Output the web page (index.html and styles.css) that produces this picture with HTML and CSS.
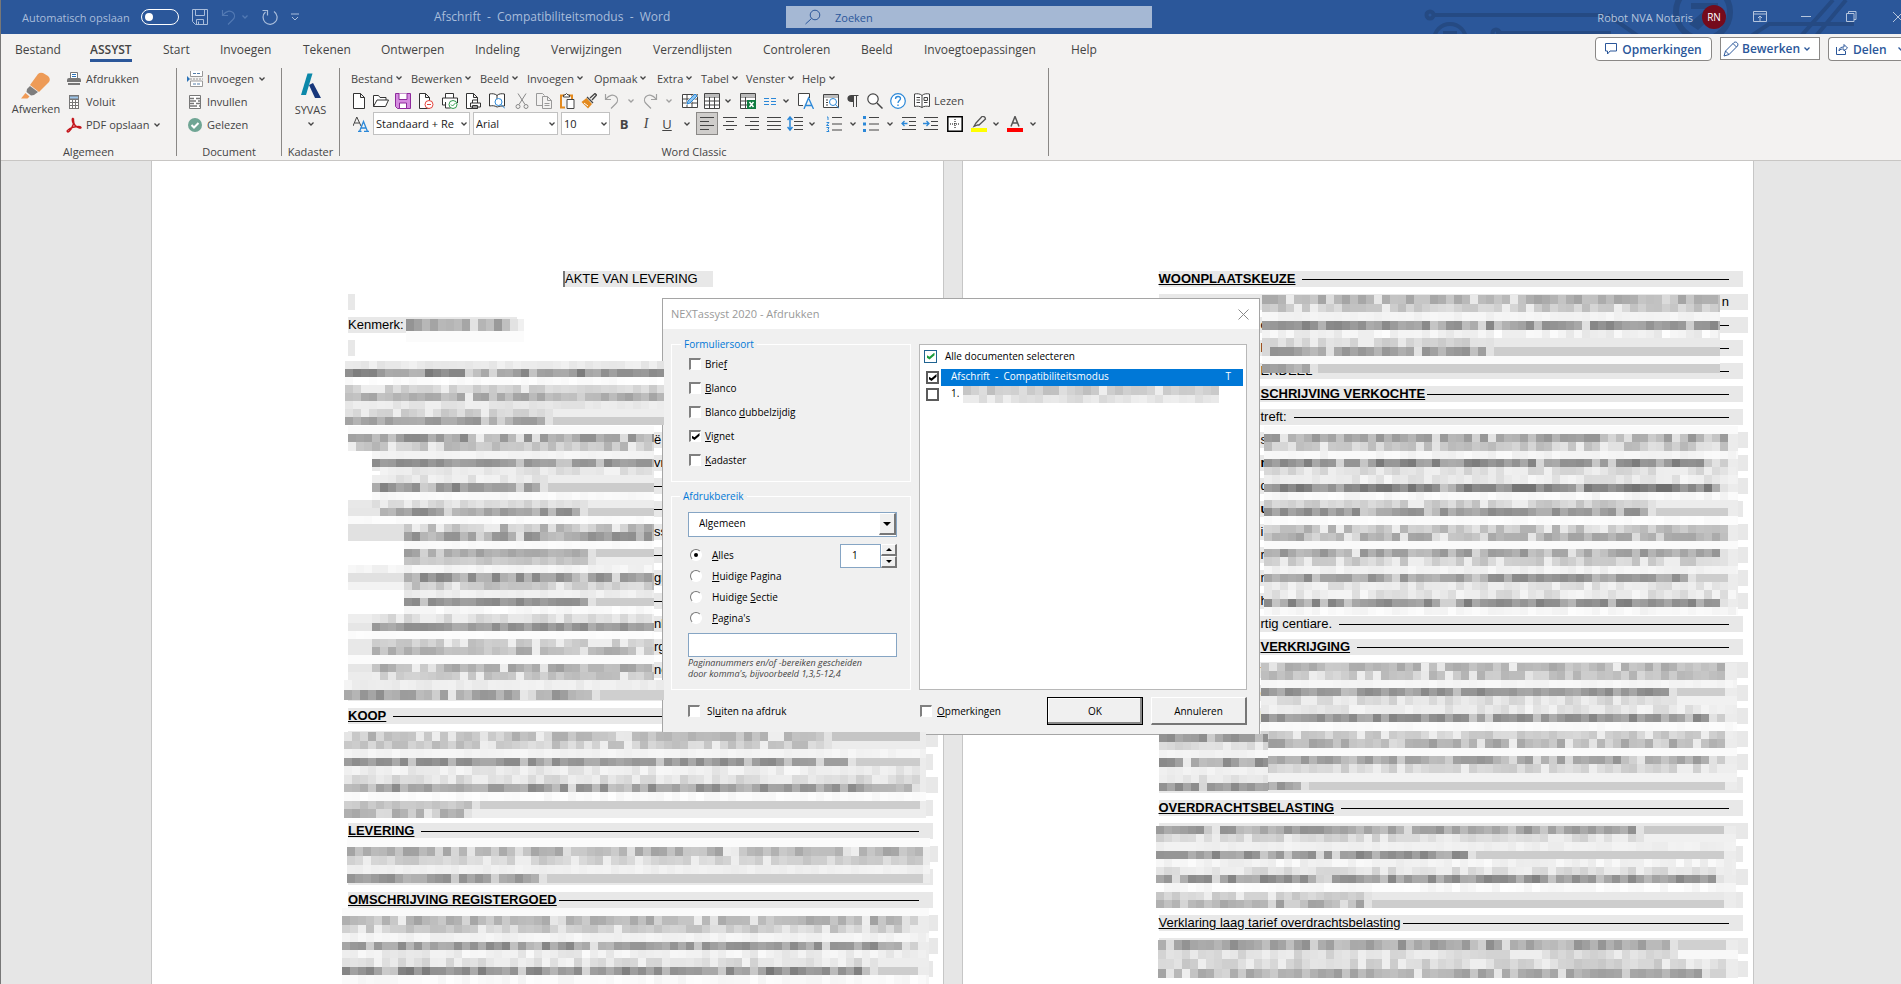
FILE: index.html
```html
<!DOCTYPE html>
<html lang="nl">
<head>
<meta charset="utf-8">
<title>Afschrift - Compatibiliteitsmodus - Word</title>
<link rel="stylesheet" href="styles.css">
</head>
<body>
<svg class="sprite" aria-hidden="true">
  <symbol id="chev" viewBox="0 0 8 8"><path d="M1.5 2.5 4 5l2.500-2.500" fill="none" stroke="currentColor" stroke-width="1.300"/></symbol>
  <symbol id="page" viewBox="0 0 16 16"><path d="M2.500.5h7l4 4v11h-11zM9.500.5v4h4" fill="#fff" stroke="#333"/></symbol>
  <symbol id="floppy" viewBox="0 0 16 16"><path d="M.5.5h15v15h-12l-3-3zM3.500.5v6h9v-6M4.500 15.500v-5h7v5M6.500 15v-2.500" fill="none" stroke="currentColor"/></symbol>
  <symbol id="undo" viewBox="0 0 16 16"><path d="M1.500 1v5.500H7M2 6c3-4 7-5 10-2.500 2.500 2.500 1.500 5.500 0 7L7 15.500" fill="none" stroke="currentColor" stroke-width="1.200"/></symbol>
</svg>

<header class="titlebar">
  <svg class="circuit" viewBox="0 0 480 34" aria-hidden="true">
    <g fill="none" stroke="#254a83" stroke-width="4"><circle cx="9" cy="15" r="3.500"/><path d="M13 15h170M75 33h115M187 15l40 28M330 36l18-12h85M380 36l32-36M395 36l30-36"/><circle cx="75" cy="33" r="3.500"/><circle cx="29" cy="40" r="16"/><circle cx="282" cy="12" r="27" stroke-width="6"/></g>
    <path d="M22 31h14v4H22zM270 3h27v6h-27zM268 24l17-15 8 6-16 15z" fill="#254a83"/>
  </svg>
  <div class="quick">
    <label class="autosave" for="auto">Automatisch opslaan</label><input class="toggle" type="checkbox" id="auto">
    <button class="tb" aria-label="Opslaan"><svg class="i16"><use href="#floppy"/></svg></button>
    <button class="tb dim" aria-label="Ongedaan maken"><svg class="i16"><use href="#undo"/></svg><svg class="i8"><use href="#chev"/></svg></button>
    <button class="tb" aria-label="Herhalen"><svg class="i16" viewBox="0 0 16 16"><path d="M3.500 3A7 7 0 1 0 12 2.500M.5 1.500h5v5" fill="none" stroke="currentColor" stroke-width="1.200"/></svg></button>
    <button class="tb" aria-label="Werkbalk aanpassen"><svg class="i8" viewBox="0 0 8 8"><path d="M0 1h8M1 4l3 3 3-3" fill="none" stroke="currentColor"/></svg></button>
  </div>
  <div class="doctitle">Afschrift&nbsp; -&nbsp; Compatibiliteitsmodus&nbsp; -&nbsp; Word</div>
  <div class="search"><svg class="i16" viewBox="0 0 16 16"><circle cx="10" cy="6" r="4.800" fill="none" stroke="currentColor"/><path d="M6.500 9.500.5 15" stroke="currentColor"/></svg><input type="text" aria-label="Zoeken" placeholder="Zoeken"></div>
  <div class="winctl">
    <span>Robot NVA Notaris</span><span class="avatar">RN</span>
    <button class="tb wide" aria-label="Lint weergeven"><svg width="14" height="12" viewBox="0 0 14 12"><path d="M.5.5h13v10H.5zM.5 3h13M7 10V5M5 7l2-2 2 2" fill="none" stroke="currentColor"/></svg></button>
    <button class="tb wide" aria-label="Minimaliseren"><svg width="10" height="12" viewBox="0 0 10 12"><path d="M0 5.500h10" stroke="currentColor"/></svg></button>
    <button class="tb wide" aria-label="Herstellen"><svg width="11" height="12" viewBox="0 0 11 12"><path d="M.5 2.500h7.500v8H.5zM2.500 2V.5h7.500v8H8" fill="none" stroke="currentColor"/></svg></button>
    <button class="tb close" aria-label="Sluiten"><svg width="8" height="12" viewBox="0 0 8 12"><path d="m0 1 10 10M10 1 0 11" stroke="currentColor"/></svg></button>
  </div>
</header>

<section class="ribbon">
  <div class="tabrow">
    <nav class="tabs">
      <a href="#">Bestand</a><a href="#" class="on"><span>ASSYST</span></a><a href="#">Start</a><a href="#">Invoegen</a><a href="#">Tekenen</a><a href="#">Ontwerpen</a><a href="#">Indeling</a><a href="#">Verwijzingen</a><a href="#">Verzendlijsten</a><a href="#">Controleren</a><a href="#">Beeld</a><a href="#">Invoegtoepassingen</a><a href="#">Help</a>
    </nav>
    <div class="share">
      <button class="pill"><svg width="12" height="12" viewBox="0 0 12 12"><path d="M.5.500h11v7.500H5L2.500 11V8h-2z" fill="none" stroke="currentColor"/></svg>Opmerkingen</button>
      <button class="pill square"><svg class="i16" viewBox="0 0 16 16"><path d="m1 15 1.500-5L11 1.500c2-1.500 5 1 3.500 3.500L6 13.500zM2.500 10 6 13.500M10 2.500 13.500 6" fill="none" stroke="currentColor"/></svg>Bewerken<svg class="i8"><use href="#chev"/></svg></button>
      <button class="pill last"><svg width="12" height="12" viewBox="0 0 12 12"><path d="M.5 4v7.500h9V8M3 8c0-3 2-4 5-4V1.500L11.500 5 8 8V6C6 6 4 6 3 8z" fill="none" stroke="currentColor"/></svg>Delen<svg class="i8"><use href="#chev"/></svg></button>
    </div>
  </div>
  <div class="groups">
    <div class="group g1">
      <div class="gbody">
        <button class="big"><svg width="30" height="28" viewBox="0 0 30 28"><path d="M17 2q2-2 5-1l5 3q3 3 1 6L18 20 9 13z" fill="#ed9b57"/><path d="m9 14 8 6-4 3-3 .5L5.500 20 6 17z" fill="#7d7d7d"/><path d="m4.500 21 4 3.500-2 2H0z" fill="#f09a55"/></svg>Afwerken</button>
        <div class="stack">
          <button><svg class="i16 w14" viewBox="0 0 14 14"><path d="M3.500 6V.5h7V6" fill="#fff" stroke="#777"/><path d="M5 2.500h4M5 4.500h4" stroke="#2b73b8"/><path d="M0 8q0-2 2-2h10q2 0 2 2v2H0zM1 11h12v2H1z" fill="#777"/></svg>Afdrukken</button>
          <button><svg class="i16 w14" viewBox="0 0 14 14"><path d="M2 0h10v14H2z" fill="#777"/><path d="M3 1.500h8v2H3z" fill="#9cc5ea"/><path d="M3 5h2v2H3zm3 0h2v2H6zm3 0h2v2H9zM3 8h2v2H3zm3 0h2v2H6zm3 0h2v2H9zM3 11h2v2H3zm3 0h2v2H6zm3 0h2v2H9z" fill="#fff"/></svg>Voluit</button>
          <button><svg class="i16" viewBox="0 0 16 16"><path d="M7 1.500C6 1 6 4 7.500 7c-1 3-3 6-4.500 7.500C1.500 15.500.5 14 2 13c3-2.500 8-3.500 11-3.500 2.500 0 2.500 2 .5 1.500C10 10 7 7.500 7.500 2z" fill="none" stroke="#c4161c" stroke-width="1.500"/></svg>PDF opslaan<svg class="i8"><use href="#chev"/></svg></button>
        </div>
      </div>
      <div class="gname">Algemeen</div>
    </div>
    <div class="group g2">
      <div class="gbody">
        <div class="stack">
          <button><svg class="i16" viewBox="0 0 16 16"><path d="M3.500 0v5.500h12V0M3.500 15.500v-5.500h12v5.500z" fill="#fff" stroke="#999"/><path d="M6 2.500h3m1 0h3M6 13h3m1 0h3" stroke="#557ea8"/><path d="M3 8h13" stroke="#999" stroke-dasharray="2 1"/><path d="m0 5 3 3-3 3z" fill="#2b73b8"/></svg>Invoegen<svg class="i8"><use href="#chev"/></svg></button>
          <button><svg class="i16 w14" viewBox="0 0 14 14"><path d="M1.500.5h11v13h-11z" fill="#fff" stroke="#777"/><path d="M2 3.500h4m2 0h4M2 6h6m2 0h2M2 8.500h4m2 0h4M2 11h7m2 0h1" stroke="#777" stroke-width="1.500"/></svg>Invullen</button>
          <button><svg class="i16 w14" viewBox="0 0 14 14"><circle cx="7" cy="7" r="7" fill="#6fa594"/><path d="m3.500 7 2.500 2.500L10.500 5" fill="none" stroke="#fff" stroke-width="2"/></svg>Gelezen</button>
        </div>
      </div>
      <div class="gname">Document</div>
    </div>
    <div class="group g3">
      <div class="gbody">
        <button class="big"><svg width="22" height="28" viewBox="0 0 22 28"><path d="M7.500 1.500h5L6 23H1z" fill="#0b88a9"/><path d="m9 13 4-2 8 15h-6z" fill="#17377b"/></svg>SYVAS<svg class="i8"><use href="#chev"/></svg></button>
      </div>
      <div class="gname">Kadaster</div>
    </div>
    <div class="group g4">
      <div class="classic">
        <div class="menus">
          <button>Bestand<svg class="i8"><use href="#chev"/></svg></button><button>Bewerken<svg class="i8"><use href="#chev"/></svg></button><button>Beeld<svg class="i8"><use href="#chev"/></svg></button><button>Invoegen<svg class="i8"><use href="#chev"/></svg></button><button>Opmaak<svg class="i8"><use href="#chev"/></svg></button><button>Extra<svg class="i8"><use href="#chev"/></svg></button><button>Tabel<svg class="i8"><use href="#chev"/></svg></button><button>Venster<svg class="i8"><use href="#chev"/></svg></button><button>Help<svg class="i8"><use href="#chev"/></svg></button>
        </div>
        <div class="tools">
          <button aria-label="Nieuw"><svg class="i16"><use href="#page"/></svg></button>
          <button aria-label="Openen"><svg class="i16" viewBox="0 0 16 16"><path d="M.5 13.500v-11h5l1.500 2h6V7M.5 13.500 4 7h11.500l-3 6.500z" fill="#fff" stroke="#333"/></svg></button>
          <button aria-label="Opslaan"><svg class="i16" viewBox="0 0 16 16"><path d="M.5.5h15v15h-13l-2-2z" fill="#d58be0" stroke="#8e2a9c"/><path d="M4 .5v6h8v-6M4.500 15.500V10h7v5.500z" fill="#fff" stroke="#8e2a9c"/></svg></button>
          <button aria-label="Sluiten"><svg class="i16" viewBox="0 0 16 16"><path d="M1.500.5h6l4 4v11h-10zM7.500.5v4h4" fill="#fff" stroke="#333"/><circle cx="11" cy="11.500" r="4" fill="#fff" stroke="#e4413a"/><path d="M9 11.500h4" stroke="#e4413a"/></svg></button>
          <button aria-label="Snel afdrukken"><svg class="i16" viewBox="0 0 16 16"><path d="M3.500 5V.5h8V5M3.500 12H.5V5h15v5M3.500 9v6h5" fill="#fff" stroke="#333"/><circle cx="11" cy="11.500" r="4" fill="#fff" stroke="#2f9a4b"/><path d="m9 11.500 1.500 1.500 3-3" fill="none" stroke="#2f9a4b"/></svg></button>
          <button aria-label="Afdrukken"><svg class="i16" viewBox="0 0 16 16"><path d="M1.500.5h7l4 4v11h-11zM8.500.5v4h4" fill="#fff" stroke="#333"/><path d="M7.500 10V7h5v3M5.500 10h10v4h-10zM7.500 12.500h5v3h-5z" fill="#fff" stroke="#333"/></svg></button>
          <button aria-label="Afdrukvoorbeeld"><svg class="i16" viewBox="0 0 16 16"><path d="M8 2.500C6 .5 3 .5.5 1v12c3-.5 5-.5 7.500 1 1 0 2-1 5-1h2.500V1C13 .5 10 .5 8 2.500v4" fill="#fff" stroke="#333"/><circle cx="9.500" cy="9" r="3.500" fill="#fff" stroke="#2b88d8"/><path d="m12 11.500 4 4" stroke="#2b88d8"/></svg></button>
          <button class="off" aria-label="Knippen"><svg class="i16" viewBox="0 0 16 16"><path d="m4 .5 7 11M12 .5l-7 11" stroke="#888"/><circle cx="4" cy="13.500" r="2" fill="none" stroke="#888"/><circle cx="12" cy="13.500" r="2" fill="none" stroke="#888"/></svg></button>
          <button class="off" aria-label="Kopiëren"><svg class="i16" viewBox="0 0 16 16"><path d="M6 12.500H.5V.5h6l2 2M6.500 3.500h5l4 4v8h-9zM11.500 3.500v4h4M8.500 10.500h5M8.500 12.500h5" fill="none" stroke="#999"/></svg></button>
          <button aria-label="Plakken"><svg class="i16" viewBox="0 0 16 16"><path d="M6 14.500H2v-12h11V6" fill="none" stroke="#e38a1f" stroke-width="2"/><path d="M4.500 4V2H6q1.500-3 3 0h1.500v2zM8 6.500h7v9H8z" fill="#fff" stroke="#444"/></svg></button>
          <button aria-label="Opmaak kopiëren"><svg class="i16" viewBox="0 0 16 16"><path d="m9 5 5-4.500 1.500 1.500L11 7M6 4l6 6" fill="none" stroke="#444" stroke-width="1.300"/><path d="m5.500 5 5.500 6-4 4.500L.5 9z" fill="#e38a1f"/><path d="m3 10 4 3" stroke="#fff"/></svg></button>
          <button class="off" aria-label="Ongedaan maken"><svg class="i16"><use href="#undo"/></svg></button><button class="off" aria-label="Meer"><svg class="i8"><use href="#chev"/></svg></button>
          <button class="off" aria-label="Opnieuw"><svg class="i16 flip"><use href="#undo"/></svg></button><button class="off" aria-label="Meer"><svg class="i8"><use href="#chev"/></svg></button>
          <button aria-label="Tabel tekenen"><svg class="i16" viewBox="0 0 16 16"><path d="M.5 1.500h15v13H.5zM.5 6h15M.5 10h15M5 1.500v13M10 1.500v13" fill="#fff" stroke="#444"/><path d="m4 12 1-4 8-8 3 3-8 8z" fill="#fff"/><path d="m5 11 1-3 7-7 2 2-7 7z" fill="#8cc4f0" stroke="#2b88d8"/></svg></button>
          <button aria-label="Tabel"><svg class="i16" viewBox="0 0 16 16"><path d="M.5.5h15v15H.5zM.5 4h15M.5 8h15M.5 12h15M5.500 4v12M10.500 4v12" fill="#fff" stroke="#444"/><path d="M1 1h14v3H1z" fill="#bbb"/></svg></button><button aria-label="Meer"><svg class="i8"><use href="#chev"/></svg></button>
          <button aria-label="Excel-werkblad"><svg class="i16" viewBox="0 0 16 16"><path d="M.5.5h15v15H.5zM.5 4h15M.5 8h15M.5 12h15M5.500 4v12" fill="#fff" stroke="#444"/><path d="M1 1h14v3H1z" fill="#bbb"/><path d="M7 7h9v9H7z" fill="#107c41"/><path d="m9.500 9 4 5m0-5-4 5" stroke="#fff" stroke-width="1.500"/></svg></button>
          <button aria-label="Kolommen"><svg class="i16 w14" viewBox="0 0 14 14"><path d="M1 4.500h5M1 7.500h5M1 10.500h5M8 4.500h5M8 7.500h5M8 10.500h5" stroke="#2b88d8"/></svg></button><button aria-label="Meer"><svg class="i8"><use href="#chev"/></svg></button>
          <button aria-label="Tekstvak"><svg class="i16" viewBox="0 0 16 16"><path d="M5 12.500H.5V.5h11V5" fill="#fff" stroke="#444"/><path d="m6 16 4.500-11L15.500 16M7.500 12.500h6" fill="none" stroke="#2b88d8" stroke-width="1.300"/></svg></button>
          <button aria-label="Veld zoeken"><svg class="i16" viewBox="0 0 16 16"><path d="M.5 1.500h15v13H.5z" fill="#fff" stroke="#444"/><path d="M1 2h14v3H1z" fill="#bbb"/><path d="M3 7h2M3 9.500h2M3 12h2" stroke="#444"/><circle cx="10" cy="9" r="3.500" fill="#fff" stroke="#2b88d8"/><path d="m12.500 11.500 3.500 4" stroke="#2b88d8"/></svg></button>
          <button aria-label="Alles weergeven"><svg class="i16 w14" viewBox="0 0 14 14"><path d="M8 1H5.500a3.500 3 0 0 0 0 7H8z" fill="#444"/><path d="M7.500 1v12M10.500 1v12M5 1.500h7.500" stroke="#444" fill="none"/></svg></button>
          <button aria-label="Zoeken"><svg class="i16" viewBox="0 0 16 16"><circle cx="6" cy="6" r="5.200" fill="#fff" stroke="#444" stroke-width="1.200"/><path d="m10 10 5.500 5.500" stroke="#444" stroke-width="1.500"/></svg></button>
          <button aria-label="Help"><svg class="i16" viewBox="0 0 16 16"><circle cx="8" cy="8" r="7.300" fill="#fff" stroke="#2b88d8" stroke-width="1.200"/><path d="M5.500 6c0-3.500 5-3 5-.5C10.500 7.500 8 7.500 8 10M8 11.500V13" fill="none" stroke="#2b88d8" stroke-width="1.300"/></svg></button>
          <button class="read"><svg class="i16" viewBox="0 0 16 16"><path d="M8 2.500C6 .5 3 .5.5 1v12.500c3-.5 5-.5 7.500 1 1.500-1.500 5-1.500 7.500-1V1C13 .5 10 .5 8 2.500zm0 0v12M2.500 4.500H6M2.500 7H6M2.500 9.500H6M10 4.500h3.500v3H10zM10 9.500h3.500" fill="#fff" stroke="#444"/></svg>Lezen</button>
        </div>
        <div class="format">
          <button aria-label="Stijlen"><svg class="i16" viewBox="0 0 16 16"><path d="m0 10 3.800-9L8 10M1.500 7h5" fill="none" stroke="#444"/><path d="M5 15.500h3.500m2.500 0h5M6.500 15.500l4-10 4 10M8 12h5" fill="none" stroke="#2b88d8" stroke-width="1.300"/></svg></button>
          <span class="combo c1"><select aria-label="Stijl"><option>Standaard + Re</option></select><svg class="i8"><use href="#chev"/></svg></span>
          <span class="combo c2"><select aria-label="Lettertype"><option>Arial</option></select><svg class="i8"><use href="#chev"/></svg></span>
          <span class="combo c3"><select aria-label="Tekengrootte"><option>10</option></select><svg class="i8"><use href="#chev"/></svg></span>
          <button class="ltr"><b>B</b></button><button class="ltr"><i>I</i></button><button class="ltr"><u>U</u></button><button aria-label="Meer"><svg class="i8"><use href="#chev"/></svg></button>
          <button class="pressed" aria-label="Links"><svg class="i16" viewBox="0 0 16 16"><path d="M1 1.500h14M1 5.500h9M1 9.500h14M1 13.500h9" stroke="#444"/></svg></button>
          <button aria-label="Centreren"><svg class="i16" viewBox="0 0 16 16"><path d="M1 1.500h14M4 5.500h8M1 9.500h14M4 13.500h8" stroke="#444"/></svg></button>
          <button aria-label="Rechts"><svg class="i16" viewBox="0 0 16 16"><path d="M1 1.500h14M6 5.500h9M1 9.500h14M6 13.500h9" stroke="#444"/></svg></button>
          <button aria-label="Uitvullen"><svg class="i16" viewBox="0 0 16 16"><path d="M1 1.500h14M1 5.500h14M1 9.500h14M1 13.500h14" stroke="#444"/></svg></button>
          <button aria-label="Regelafstand"><svg class="i16" viewBox="0 0 16 16"><path d="M7 1.500h9M7 5.500h9M7 9.500h9M7 13.500h9" stroke="#444"/><path d="M3 1v13M.5 4 3 1l2.500 3M.5 11 3 14l2.500-3" fill="none" stroke="#2b88d8" stroke-width="1.500"/></svg></button><button aria-label="Meer"><svg class="i8"><use href="#chev"/></svg></button>
          <button aria-label="Nummering"><svg class="i16" viewBox="0 0 16 16"><path d="M6 1.500h10M6 8h10M6 14h10" stroke="#444"/><path d="M1 1h1v3M.5 6.500H3L.5 9.500H3M.5 11.500H3l-1 2 1 2H.5" fill="none" stroke="#2b88d8"/></svg></button><button aria-label="Meer"><svg class="i8"><use href="#chev"/></svg></button>
          <button aria-label="Opsommingstekens"><svg class="i16" viewBox="0 0 16 16"><path d="M6 1.500h10M6 8h10M6 14h10" stroke="#444"/><path d="M0 0h3v3H0zM0 6.500h3v3H0zM0 13h3v3H0z" fill="#2b88d8"/></svg></button><button aria-label="Meer"><svg class="i8"><use href="#chev"/></svg></button>
          <button aria-label="Inspringing verkleinen"><svg class="i16" viewBox="0 0 16 16"><path d="M1 1.500h14M8 5.500h7M8 9.500h7M1 13.500h14" stroke="#444"/><path d="M6.500 7.500H1M3.500 5 1 7.500 3.500 10" fill="none" stroke="#2b88d8" stroke-width="1.300"/></svg></button>
          <button aria-label="Inspringing vergroten"><svg class="i16" viewBox="0 0 16 16"><path d="M1 1.500h14M8 5.500h7M8 9.500h7M1 13.500h14" stroke="#444"/><path d="M0 7.500h6M3.500 5 6 7.500 3.500 10" fill="none" stroke="#2b88d8" stroke-width="1.300"/></svg></button>
          <button aria-label="Randen"><svg class="i16" viewBox="0 0 16 16"><path d="M.8.8h14.400v14.400H.8z" fill="#fff" stroke="#000" stroke-width="1.500"/><path d="M3 8h10M8 3v10" stroke="#000" stroke-dasharray="1 1"/></svg></button>
          <button aria-label="Markeren"><svg class="i16" viewBox="0 0 16 16"><path d="M0 12h16v4H0z" fill="#ff0"/><path d="m5 7 6-6.500q3-.5 3.500 2.500L8 9H6.500L3 10.500z" fill="none" stroke="#555" stroke-width="1.300"/></svg></button><button aria-label="Meer"><svg class="i8"><use href="#chev"/></svg></button>
          <button aria-label="Tekstkleur"><svg class="i16" viewBox="0 0 16 16"><path d="M0 12h16v4H0z" fill="red"/><path d="m4 10.500 4-10 4 10M5.500 7h5" fill="none" stroke="#555" stroke-width="1.500"/></svg></button><button aria-label="Meer"><svg class="i8"><use href="#chev"/></svg></button>
        </div>
      </div>
      <div class="gname">Word Classic</div>
    </div>
  </div>
</section>

<main class="workspace">
  <article class="sheet">
    <div class="ln title"><span>AKTE VAN LEVERING</span></div>
    <div class="ln stub"></div>
    <div class="ln short"><span>Kenmerk:</span></div>
    <div class="ln stub"></div>
    <div class="ln wrap"></div>
    <div class="ln wrap"></div>
    <div class="ln"></div>
    <div class="ln wrap frag"><span>ë</span></div>
    <div class="ln wrap frag in1"><span>vr</span></div>
    <div class="ln frag in1"><hr></div>
    <div class="ln frag"><hr></div>
    <div class="ln wrap frag"><span>ss</span></div>
    <div class="ln frag in2"><hr></div>
    <div class="ln wrap frag"><span>gr</span></div>
    <div class="ln frag in2"><hr></div>
    <div class="ln wrap frag"><span>nl</span></div>
    <div class="ln wrap frag"><span>rg</span></div>
    <div class="ln wrap frag"><span>no</span></div>
    <div class="ln"></div>
    <div class="ln"><h2>KOOP</h2><hr></div>
    <div class="ln wrap"></div>
    <div class="ln"></div>
    <div class="ln wrap"></div>
    <div class="ln"></div>
    <div class="ln"><h2>LEVERING</h2><hr></div>
    <div class="ln wrap"></div>
    <div class="ln"></div>
    <div class="ln tight"><h2>OMSCHRIJVING REGISTERGOED</h2><hr></div>
    <div class="ln wrap"></div>
    <div class="ln wrap"></div>
    <div class="ln"></div>
  </article>
  <article class="sheet">
    <div class="ln"><h2>WOONPLAATSKEUZE</h2><hr></div>
    <div class="ln wrap end"><span>n</span></div>
    <div class="ln wrap side"><span>c</span><hr></div>
    <div class="ln side"><span>k</span><hr></div>
    <div class="ln side"><span>ERDEEL</span><hr></div>
    <div class="ln side tight"><h2>SCHRIJVING VERKOCHTE</h2><hr></div>
    <div class="ln side"><span>treft:</span><hr></div>
    <div class="ln wrap side"><span>s</span></div>
    <div class="ln wrap side"><b>n</b></div>
    <div class="ln wrap side"><span>d</span></div>
    <div class="ln side"><b>u</b></div>
    <div class="ln wrap side"><span>i</span></div>
    <div class="ln wrap side"><span>r</span></div>
    <div class="ln wrap side"><span>n</span></div>
    <div class="ln wrap side"><span>h</span></div>
    <div class="ln side"><span>rtig centiare.</span><hr></div>
    <div class="ln side"><h2>VERKRIJGING</h2><hr></div>
    <div class="ln wrap side"><span>t</span></div>
    <div class="ln wrap side"><span>e</span></div>
    <div class="ln wrap side"><b>l</b></div>
    <div class="ln wrap"></div>
    <div class="ln wrap"></div>
    <div class="ln"></div>
    <div class="ln"><h2>OVERDRACHTSBELASTING</h2><hr></div>
    <div class="ln wrap"></div>
    <div class="ln"></div>
    <div class="ln wrap"></div>
    <div class="ln"></div>
    <div class="ln tight"><h3>Verklaring laag tarief overdrachtsbelasting</h3><hr></div>
    <div class="ln wrap"></div>
    <div class="ln wrap"></div>
  </article>

  <form class="dialog" role="dialog" aria-labelledby="dt">
    <header class="dtitle"><span id="dt">NEXTassyst 2020 - Afdrukken</span><button type="button" aria-label="Sluiten"><svg width="11" height="11" viewBox="0 0 11 11"><path d="m.5.500 10 10M10.500.5l-10 10" stroke="#888"/></svg></button></header>
    <div class="dbody">
      <div class="dleft">
        <fieldset class="kind">
          <legend>Formuliersoort</legend>
          <label><input type="checkbox"><span>Brie<u>f</u></span></label>
          <label><input type="checkbox"><span><u>B</u>lanco</span></label>
          <label><input type="checkbox"><span>Blanco <u>d</u>ubbelzijdig</span></label>
          <label><input type="checkbox" checked><span><u>V</u>ignet</span></label>
          <label><input type="checkbox"><span><u>K</u>adaster</span></label>
        </fieldset>
        <fieldset class="range">
          <legend>Afdrukbereik</legend>
          <div class="drop"><select aria-label="Bereik"><option>Algemeen</option></select><span class="arrow"></span></div>
          <div class="radios">
            <div>
              <label><input type="radio" name="r" checked><span><u>A</u>lles</span></label>
              <label><input type="radio" name="r"><span><u>H</u>uidige Pagina</span></label>
              <label><input type="radio" name="r"><span>Huidige <u>S</u>ectie</span></label>
              <label><input type="radio" name="r"><span><u>P</u>agina's</span></label>
            </div>
            <div class="spin"><input type="text" value="1" aria-label="Aantal"><div><button type="button" class="up" aria-label="Meer"></button><button type="button" class="down" aria-label="Minder"></button></div></div>
          </div>
          <input class="pages" type="text" aria-describedby="hint" aria-label="Paginanummers">
          <p class="hint" id="hint">Paginanummers en/of -bereiken gescheiden<br>door komma's, bijvoorbeeld 1,3,5-12,4</p>
        </fieldset>
      </div>
      <div class="list">
        <label class="all"><input type="checkbox" checked><span>Alle documenten selecteren</span></label>
        <label class="item sel"><input type="checkbox" checked><span class="cell"><span>Afschrift&nbsp; -&nbsp; Compatibiliteitsmodus</span><span>T</span></span></label>
        <label class="item"><input type="checkbox"><span class="cell">1.</span></label>
      </div>
    </div>
    <footer class="dfoot">
      <label class="f1"><input type="checkbox"><span>Sl<u>u</u>iten na afdruk</span></label>
      <label class="f2"><input type="checkbox"><span><u>O</u>pmerkingen</span></label>
      <button type="button" class="ok">OK</button><button type="button" class="cancel">Annuleren</button>
    </footer>
  </form>
</main>
<script src="mosaic.js"></script>
</body>
</html>
```
FILE: styles.css
```css
* { box-sizing: border-box; }
body { margin: 0; height: 100vh; overflow: hidden; display: flex; flex-direction: column; background: #e6e6e6; border-left: 1px solid #777; font-family: "Open Sans", "Noto Sans", sans-serif; font-size: 11px; color: #444; }
button { font: inherit; color: inherit; background: none; border: 0; padding: 0; display: flex; align-items: center; justify-content: center; white-space: nowrap; }
button svg { flex: none; }
.sprite { position: absolute; width: 0; height: 0; }
.i16 { width: 16px; height: 16px; flex: none; }
.w14 { width: 14px; height: 14px; }
.i8 { width: 8px; height: 8px; }
.flip { transform: scaleX(-1); }

.titlebar { position: relative; flex: none; height: 34px; background: #2b579a; color: #a9bddb; display: grid; grid-template-columns: 433px 352px 366px 1fr; align-items: center; overflow: hidden; }
.circuit { position: absolute; right: 0; top: 0; width: 480px; height: 34px; }
.quick { display: flex; align-items: center; padding-left: 21px; gap: 13px; }
.autosave { margin-right: -2px; }
.toggle { appearance: none; width: 38px; height: 16px; margin: 0; border: 1px solid #fff; border-radius: 8px; padding: 3px; }
.toggle::before { content: ""; display: block; width: 8px; height: 8px; border-radius: 4px; background: #fff; }
.tb.dim { color: #5279b3; gap: 4px; }
.doctitle { font-size: 12px; line-height: 16px; }
.search { position: relative; height: 22px; background: #a5b8d4; color: #2b579a; display: flex; align-items: center; padding-left: 19px; gap: 14px; }
.search input { flex: 1; min-width: 0; border: 0; background: none; font: inherit; padding: 0; outline: 0; }
.search input::placeholder { color: #2b579a; opacity: 1; }
.winctl { position: relative; display: flex; align-items: center; justify-content: flex-end; gap: 9px; color: #b5c5dd; overflow: hidden; }
.avatar { width: 24px; height: 24px; margin-right: 6px; border-radius: 12px; background: #750b1c; color: #fff; font-size: 10px; line-height: 24px; text-align: center; }
.tb.wide { width: 37px; }
.winctl .close { width: 22px; justify-content: flex-end; }

.ribbon { flex: none; height: 127px; background: #f3f2f1; border-bottom: 1px solid #c8c6c4; }
.tabrow { display: flex; justify-content: space-between; height: 31px; overflow: hidden; }
.tabs { display: grid; grid-template-columns: 75px 73px 57px 83px 78px 94px 76px 102px 110px 98px 63px 147px auto; padding-left: 14px; font-size: 12px; line-height: 32px; }
.tabs a { color: #444; text-decoration: none; white-space: nowrap; }
.tabs .on span { display: inline-block; height: 28px; border-bottom: 3px solid #2b579a; font-weight: 600; }
.share { display: flex; align-items: flex-start; gap: 8px; padding-top: 3px; color: #2b579a; font-size: 12px; font-weight: 600; }
.pill { height: 24px; background: #fff; border: 1px solid #8a8886; border-radius: 4px; gap: 5px; width: 117px; }
.square { border-radius: 0; width: 100px; height: 23px; gap: 3px; justify-content: flex-start; padding-left: 2px; }
.last { width: 73px; border-right: 0; border-radius: 4px 0 0 4px; justify-content: flex-start; padding-left: 7px; overflow: hidden; }
.last .i8 { margin-left: 5px; }
.groups { display: flex; height: 91px; padding-top: 3px; }
.group { display: flex; flex-direction: column; justify-content: space-between; height: 88px; border-right: 1px solid #8a8886; }
.g1 { width: 176px; }
.g1 .gbody { padding-left: 8px; }
.g2 { width: 105px; }
.g2 .gbody { padding-left: 10px; }
.g3 { width: 58px; }
.g4 { width: 709px; }
.classic { padding-left: 8px; }
.gbody, .classic { margin-top: -1px; }
.gname { text-align: center; line-height: 14px; margin-bottom: -3px; }
.gbody { display: flex; justify-content: flex-start; }
.big { flex-direction: column; justify-content: flex-start; width: 54px; padding-top: 5px; gap: 1px; line-height: 16px; }
.g3 .gbody { justify-content: center; }
.g3 .big { gap: 2px; }
.stack { display: flex; flex-direction: column; padding-left: 3px; }
.stack button { justify-content: flex-start; height: 23px; gap: 4px; }
.stack .w14 { margin: 0 1px; }
.g2 .stack { padding-left: 0; }
.menus { display: grid; grid-template-columns: 60px 69px 47px 67px 63px 44px 45px 56px auto; padding-left: 3px; width: 540px; }
.menus button { height: 22px; justify-content: flex-start; gap: 2px; }
.tools, .format { display: grid; height: 23px; align-items: center; }
.tools { grid-template-columns: 22px 22px 22px 24px 23px 23px 26px 23px 22px 23px 22px 24px 14px 24px 14px 27px 18px 13px 28px 16px 15px 25px 26px 18px 25px 21px 60px; }
.format { grid-template-columns: 25px 100px 88px 52px 22px 22px 20px 19px 23px 22px 22px 22px 19px 15px 29px 10px 26px 11px 28px 16px 31px 17px 17px 22px 14px; }
.off { color: #a0a0a0; }
.read { gap: 4px; justify-content: flex-start; padding-left: 6px; }
.combo { position: relative; display: block; height: 23px; }
.c1 { width: 97px; } .c2 { width: 85px; } .c3 { width: 49px; }
.combo select { appearance: none; width: 100%; height: 23px; border: 1px solid #c1c1c1; border-radius: 0; background: #fff; font: inherit; color: #222; padding: 0 0 0 2px; }
.combo svg { position: absolute; right: 2px; top: 8px; }
.ltr { font-size: 13px; }
.ltr i { font-family: "Liberation Serif", serif; font-size: 14px; }
.pressed { background: #cfcdcb; border: 1px solid #8a8886; height: 23px; width: 22px; }

.workspace { position: relative; flex: 1; min-height: 0; display: flex; gap: 18px; padding: 0 147px 0 150px; }
.sheet { flex: 1; min-width: 0; background: #fff; border: 1px solid #c6c6c6; border-top: 0; border-bottom: 0; padding: 110px 0 0 196px; font-family: "Liberation Sans", Arial, sans-serif; font-size: 13px; color: #000; overflow: hidden; }
.ln { height: 16px; line-height: 18px; margin: 0 10px 7px 0; padding-right: 14px; background: #e8e8e8; display: flex; gap: 7px; align-items: center; white-space: nowrap; }
.ln.wrap { margin-right: 5px; padding-right: 19px; }
.ln h2, .ln h3 { margin: 0; font-size: 13px; line-height: 18px; text-decoration: underline; }
.ln h3 { font-weight: 400; }
.ln hr { flex: 1; margin: 0; border: 0; border-top: 1px solid #000; }
.tight { gap: 2px; }
.ln.title { width: 150px; margin-left: 215px; border-left: 2px solid #777; padding: 0; }
.ln.stub { width: 7px; padding: 0; }
.ln.short { width: 169px; padding: 0; }
.frag { padding-left: 306px; }
.frag.in1 { margin-left: 24px; padding-left: 282px; }
.frag.in2 { margin-left: 56px; padding-left: 250px; }
.side { padding-left: 102px; }
.end { justify-content: flex-end; }

.mosaic { position: absolute; }

.dialog { position: absolute; left: 661px; top: 137px; width: 598px; border: 1px solid #a5a5a5; background: #f0f0f0; color: #000; font-size: 10px; line-height: 14px; }
.dtitle { height: 30px; background: #fff; color: #999; display: flex; align-items: center; justify-content: space-between; padding: 0 10px 0 8px; font-size: 11px; }
.dbody { display: grid; grid-template-columns: 240px 1fr; gap: 8px; padding: 8px 12px 0 8px; }
.dleft { display: flex; flex-direction: column; gap: 7px; }
fieldset { margin: 0; min-width: 0; border: 1px solid #fff; padding: 0 13px 0 17px; }
legend { margin-left: -8px; padding: 0 3px; line-height: 14px; color: #0078d7; }
.kind { height: 145px; padding-top: 1px; }
.range { height: 201px; padding-left: 16px; }
label { display: flex; align-items: center; white-space: nowrap; }
.dialog input[type=checkbox] { appearance: none; flex: none; width: 12px; height: 12px; margin: 0; background: #fff; border: 1px solid #fff; border-top: 2px solid #808080; border-left: 2px solid #808080; display: grid; place-items: center; }
.dialog input[type=checkbox]:checked::before { content: ""; width: 8px; height: 7px; background: currentColor; clip-path: polygon(0 35%, 38% 62%, 100% 0, 100% 40%, 38% 100%, 0 72%); }
.kind label { height: 24px; gap: 4px; }
.drop { position: relative; margin-top: 9px; height: 25px; }
.drop select { appearance: none; width: 100%; height: 25px; border: 1px solid #86a5c4; border-radius: 0; background: #fff; font: inherit; padding: 0 0 4px 10px; color: #000; }
.arrow { position: absolute; right: 1px; top: 1px; width: 17px; height: 22px; background: #f0f0f0; border: 1px solid #fff; border-right: 2px solid #777; border-bottom: 2px solid #777; display: grid; place-items: center; pointer-events: none; }
.arrow::before, .down::before, .up::before { content: ""; border: 4px solid transparent; border-bottom: 0; border-top-color: #000; }
.radios { display: flex; justify-content: space-between; align-items: flex-start; padding-top: 7px; }
.radios label { height: 21px; gap: 10px; padding-left: 2px; }
.radios input[type=radio] { appearance: none; flex: none; width: 12px; height: 12px; margin: 0; border-radius: 6px; background: #fff; border: 1px solid #fff; border-top-color: #777; border-left-color: #777; display: grid; place-items: center; }
.radios input[type=radio]:checked::before { content: ""; width: 4px; height: 4px; border-radius: 2px; background: #000; }
.spin { display: flex; width: 57px; height: 24px; }
.spin input { width: 41px; border: 1px solid #86a5c4; font: inherit; padding: 0 0 2px 11px; background: #fff; }
.spin div { flex: 1; display: grid; grid-template-rows: 1fr 1fr; }
.spin button { background: #f0f0f0; border: 1px solid #fff; border-right: 2px solid #777; border-bottom: 2px solid #777; }
.up::before, .down::before { border-width: 3px; }
.up::before { border-top: 0; border-bottom: 3px solid #000; }
.down::before { border-bottom: 0; }
.pages { display: block; width: 100%; height: 24px; margin: 5px 0 0; border: 1px solid #86a5c4; background: #fff; }
.hint { margin: 0; font-size: 9px; line-height: 11px; font-style: italic; color: #444; white-space: nowrap; }
.list { margin-top: 7px; background: #fff; border: 1px solid #b8b8b8; padding: 2px 3px 0 4px; }
.all { height: 22px; gap: 8px; padding-bottom: 4px; }
.list .all input { width: 13px; height: 13px; border: 1px solid #1f6391; color: #1a9c3b; }
.item { height: 17px; padding-left: 2px; gap: 2px; }
.list .item input { width: 13px; height: 13px; border: 2px solid #5b5b5b; }
.cell { flex: 1; height: 17px; line-height: 15px; display: flex; justify-content: space-between; padding: 0 12px 0 10px; }
.sel .cell { background: #0078d7; color: #fff; }
.dfoot { display: flex; align-items: center; padding: 6px 12px 8px 25px; height: 44px; }
.dfoot label { gap: 7px; }
.f1 { width: 232px; }
.f2 { flex: 1; }
.dfoot .f2 { gap: 5px; }
.dfoot button { width: 96px; height: 28px; border: 1px solid #fff; border-right: 2px solid #777; border-bottom: 2px solid #777; }
.dfoot .ok { border: 1px solid #000; box-shadow: inset -2px -2px 0 #888, inset 1px 1px 0 #fff; margin-right: 8px; }
```
FILE: mosaic.js
```js
// Pixelated privacy blocks over the deed text.
// Block: [x, y, width, rows]; row: [height, grey, spread, text end, tail grey, start x, lead grey]
const blocks = [
  [406, 319, 118, [[12, 172, 24, 507, 240], [11, 251, 0]]],
  [345, 361, 319, [[8, 234, 8], [8, 148, 26], [8, 251, 4], [8, 212, 12], [8, 182, 22], [8, 232, 8], [8, 212, 14, 540, 237], [8, 168, 22, 540, 204]]],
  [348, 426, 306, [[8, 250, 0], [8, 165, 30], [9, 198, 20], [8, 244, 3, 0, 0, 372], [8, 152, 16, 0, 0, 372], [8, 230, 14, 0, 0, 380], [8, 232, 14, 540, 237, 372], [9, 150, 22, 540, 204, 372], [8, 249, 4, 0, 0, 372], [8, 220, 14, 573, 236, 372, 232], [8, 160, 30, 573, 205, 380, 230], [8, 251, 2], [8, 195, 30, 0, 0, 404, 225], [9, 165, 30, 0, 0, 404, 225], [8, 250, 2, 0, 0, 404], [8, 172, 16, 582, 204, 404], [8, 200, 10, 582, 238, 404], [8, 243, 5], [9, 160, 28, 0, 0, 404, 225], [8, 205, 20, 0, 0, 404, 243], [8, 238, 6, 0, 0, 404], [8, 148, 14, 582, 204, 404], [8, 250, 6, 0, 0, 404], [9, 222, 14, 0, 0, 372, 238], [8, 155, 18, 0, 0, 372, 230], [8, 252, 1], [8, 203, 14, 0, 0, 372, 232], [8, 185, 22, 0, 0, 372, 232], [9, 251, 0], [8, 180, 22, 0, 0, 372, 230], [8, 202, 16, 0, 0, 372, 236]]],
  [344, 680, 320, [[10, 238, 6], [10, 165, 26, 585, 207]]],
  [344, 732, 582, [[9, 186, 18, 821, 197], [8, 204, 20, 821, 236], [9, 243, 4], [8, 155, 18, 845, 204], [9, 236, 12], [9, 222, 16], [8, 162, 26, 910, 204], [9, 250, 4], [8, 200, 12, 465, 205], [9, 176, 14, 457, 237]]],
  [347, 838, 583, [[9, 251, 0], [9, 182, 22], [9, 210, 14], [9, 240, 4], [9, 160, 24, 533, 205]]],
  [342, 908, 587, [[8, 250, 0], [9, 184, 22, 897, 208], [8, 206, 20, 897, 236], [9, 243, 5], [8, 158, 26, 897, 208], [8, 238, 12], [9, 226, 18, 865, 237], [8, 145, 26, 865, 205], [9, 249, 5]]],
  [1262, 295, 458, [[9, 182, 20], [8, 204, 18], [9, 243, 4], [9, 155, 24], [8, 242, 12], [9, 218, 16, 1479, 233], [9, 168, 24, 1479, 205], [8, 250, 0], [9, 168, 20, 1310, 205]]],
  [1264, 426, 474, [[8, 250, 0], [8, 172, 26, 1725, 204], [9, 206, 22, 1725, 236], [8, 245, 6], [8, 148, 26, 1708, 205], [8, 224, 16], [9, 233, 14], [8, 134, 24, 1714, 205], [8, 247, 6], [8, 207, 16, 1642, 236], [8, 156, 20, 1642, 205], [9, 251, 2], [8, 194, 22], [8, 180, 20], [8, 250, 0], [8, 170, 24, 1714, 204], [9, 208, 16, 1714, 236], [8, 242, 6], [8, 158, 26, 1682, 205], [8, 230, 14], [9, 230, 18], [8, 146, 22, 1714, 205], [8, 247, 6]]],
  [1261, 663, 476, [[8, 186, 18], [9, 198, 20], [8, 245, 3], [8, 154, 20, 1664, 205], [9, 222, 16, 1664, 241], [9, 232, 14], [8, 150, 22, 1705, 205], [9, 250, 2], [8, 206, 14], [9, 180, 24], [8, 250, 0], [8, 172, 26, 1705, 204], [9, 214, 16, 1705, 238], [9, 242, 0], [8, 165, 30, 1301, 205]]],
  [1159, 734, 109, [[8, 155, 18], [8, 220, 12], [8, 244, 4], [9, 155, 36], [8, 240, 4], [8, 230, 14], [8, 152, 18]]],
  [1156, 826, 580, [[8, 166, 24, 1631, 200], [8, 220, 16, 1631, 240], [9, 240, 4], [8, 154, 22, 1462, 204], [8, 243, 8], [8, 226, 16], [8, 154, 24, 1712, 205], [9, 249, 6], [8, 210, 14, 1357, 232], [8, 176, 22, 1357, 205]]],
  [1158, 940, 580, [[10, 168, 26, 1665, 208], [9, 222, 16, 1665, 248], [10, 214, 16], [9, 176, 22, 1698, 210]]],
  [963, 386, 256, [[9, 206, 16], [8, 228, 12]]]
];
const area = document.querySelector('.workspace');
const top0 = 161, cell = 8;
let seed = 7;
const rnd = () => (seed = (seed * 16807) % 2147483647) / 2147483647;
for (const [x, y, w, rows] of blocks) {
  const cv = document.createElement('canvas');
  cv.className = 'mosaic';
  cv.width = w;
  cv.height = rows.reduce((s, r) => s + r[0], 0);
  cv.style.left = (x - 1) + 'px';
  cv.style.top = (y - top0) + 'px';
  area.append(cv);
  const c = cv.getContext('2d');
  let cy = 0;
  for (const [h, grey, spread, end, tail, start, lead] of rows) {
    for (let cx = 0; cx < w; cx += cell) {
      const px = x + cx;
      let g = grey + (rnd() * 2 - 1) * spread;
      if (spread > 10 && rnd() < 0.12) g = Math.min(238, g + 45);
      if (start && px < start - 3) { if (!lead) continue; g = lead; }
      if (end && px >= end) g = px < end + cell ? 226 : tail;
      if (w > 460 && cx + cell >= w - 4) g = Math.max(g, 236);
      g = Math.round(g);
      c.fillStyle = `rgb(${g},${g},${g})`;
      c.fillRect(cx, cy, cell, h);
    }
    cy += h;
  }
}
```
